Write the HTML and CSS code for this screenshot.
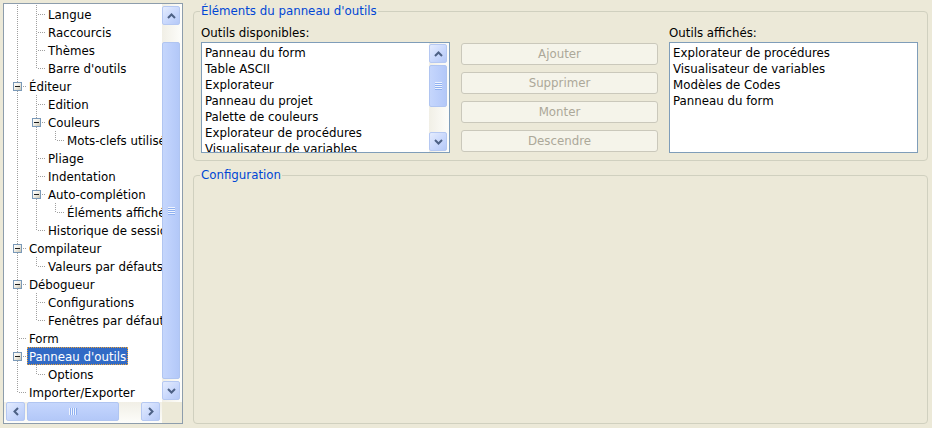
FILE: index.html
```html
<!DOCTYPE html>
<html lang="fr">
<head>
<meta charset="utf-8">
<title>Options</title>
<link rel="stylesheet" href="styles.css">
</head>
<body>
<div class="app">
  <div class="tree">
    <div class="tree-view">
      <div class="row"><span class="c g"></span><span class="c t"></span><span class="lbl">Langue</span></div>
      <div class="row"><span class="c g"></span><span class="c t"></span><span class="lbl">Raccourcis</span></div>
      <div class="row"><span class="c g"></span><span class="c t"></span><span class="lbl">Thèmes</span></div>
      <div class="row"><span class="c g"></span><span class="c l"></span><span class="lbl">Barre d'outils</span></div>
      <div class="row"><span class="c t"><span class="box"></span></span><span class="lbl">Éditeur</span></div>
      <div class="row"><span class="c g"></span><span class="c t"></span><span class="lbl">Edition</span></div>
      <div class="row"><span class="c g"></span><span class="c t"><span class="box"></span></span><span class="lbl">Couleurs</span></div>
      <div class="row"><span class="c g"></span><span class="c g"></span><span class="c l"></span><span class="lbl">Mots-clefs utilisés</span></div>
      <div class="row"><span class="c g"></span><span class="c t"></span><span class="lbl">Pliage</span></div>
      <div class="row"><span class="c g"></span><span class="c t"></span><span class="lbl">Indentation</span></div>
      <div class="row"><span class="c g"></span><span class="c t"><span class="box"></span></span><span class="lbl">Auto-complétion</span></div>
      <div class="row"><span class="c g"></span><span class="c g"></span><span class="c l"></span><span class="lbl">Éléments affichés</span></div>
      <div class="row"><span class="c g"></span><span class="c l"></span><span class="lbl">Historique de session</span></div>
      <div class="row"><span class="c t"><span class="box"></span></span><span class="lbl">Compilateur</span></div>
      <div class="row"><span class="c g"></span><span class="c l"></span><span class="lbl">Valeurs par défauts</span></div>
      <div class="row"><span class="c t"><span class="box"></span></span><span class="lbl">Débogueur</span></div>
      <div class="row"><span class="c g"></span><span class="c t"></span><span class="lbl">Configurations</span></div>
      <div class="row"><span class="c g"></span><span class="c l"></span><span class="lbl">Fenêtres par défaut</span></div>
      <div class="row"><span class="c t"></span><span class="lbl">Form</span></div>
      <div class="row"><span class="c t"><span class="box"></span></span><span class="lbl sel">Panneau d'outils</span></div>
      <div class="row"><span class="c g"></span><span class="c l"></span><span class="lbl">Options</span></div>
      <div class="row"><span class="c l"></span><span class="lbl">Importer/Exporter</span></div>
    </div>
    <div class="vscroll">
      <div class="sb-btn"><svg width="9" height="6" viewBox="0 0 9 6"><path d="M1 5 L4.5 1.5 L8 5" fill="none" stroke="#4d6185" stroke-width="2"/></svg></div>
      <div class="thumb tree-vthumb"><span class="grip-v"></span></div>
      <div class="sb-btn push"><svg width="9" height="6" viewBox="0 0 9 6"><path d="M1 1 L4.5 4.5 L8 1" fill="none" stroke="#4d6185" stroke-width="2"/></svg></div>
    </div>
    <div class="hscroll">
      <div class="sb-btn wide"><svg width="6" height="9" viewBox="0 0 6 9"><path d="M5 1 L1.5 4.5 L5 8" fill="none" stroke="#4d6185" stroke-width="2"/></svg></div>
      <div class="thumb tree-hthumb"><span class="grip-h"></span></div>
      <div class="sb-btn wide push-x"><svg width="6" height="9" viewBox="0 0 6 9"><path d="M1 1 L4.5 4.5 L1 8" fill="none" stroke="#4d6185" stroke-width="2"/></svg></div>
    </div>
    <div class="corner"></div>
  </div>

  <div class="pane">
    <fieldset class="group tools">
      <legend>Éléments du panneau d'outils</legend>
      <div class="tools-grid">
        <div class="cap">Outils disponibles:</div>
        <div class="cap col3">Outils affichés:</div>
        <div class="listbox with-sb">
          <div class="items">
            <div class="item">Panneau du form</div>
            <div class="item">Table ASCII</div>
            <div class="item">Explorateur</div>
            <div class="item">Panneau du projet</div>
            <div class="item">Palette de couleurs</div>
            <div class="item">Explorateur de procédures</div>
            <div class="item">Visualisateur de variables</div>
          </div>
          <div class="lsb">
            <div class="sb-btn"><svg width="9" height="6" viewBox="0 0 9 6"><path d="M1 5 L4.5 1.5 L8 5" fill="none" stroke="#4d6185" stroke-width="2"/></svg></div>
            <div class="thumb list-vthumb"><span class="grip-v"></span></div>
            <div class="sb-btn push"><svg width="9" height="6" viewBox="0 0 9 6"><path d="M1 1 L4.5 4.5 L8 1" fill="none" stroke="#4d6185" stroke-width="2"/></svg></div>
          </div>
        </div>
        <div class="actions">
          <button class="btn" disabled>Ajouter</button>
          <button class="btn" disabled>Supprimer</button>
          <button class="btn" disabled>Monter</button>
          <button class="btn" disabled>Descendre</button>
        </div>
        <div class="listbox">
          <div class="items">
            <div class="item">Explorateur de procédures</div>
            <div class="item">Visualisateur de variables</div>
            <div class="item">Modèles de Codes</div>
            <div class="item">Panneau du form</div>
          </div>
        </div>
      </div>
    </fieldset>
    <fieldset class="group config">
      <legend>Configuration</legend>
    </fieldset>
  </div>
</div>
</body>
</html>
```

FILE: styles.css
```css
html, body {
  margin: 0;
  padding: 0;
}

body {
  background: #ece9d8;
  color: #000;
  font-family: "DejaVu Sans", "Liberation Sans", sans-serif;
  font-size: 11.8px;
  line-height: 14px;
}

.app {
  display: flex;
  gap: 10px;
  height: 428px;
  box-sizing: border-box;
  padding: 3px 4px 4px 3px;
}

/* ---------- tree ---------- */
.tree {
  flex: none;
  width: 180px;
  box-sizing: border-box;
  border: 1px solid #8d9dac;
  background: #fff;
  display: grid;
  grid-template-columns: 1fr 20px;
  grid-template-rows: 1fr 21px;
  overflow: hidden;
}

.tree-view {
  overflow: hidden;
  padding: 1px 0 0 4px;
  min-width: 0;
}

.row {
  display: flex;
  height: 18px;
  white-space: nowrap;
}

.lbl {
  flex: none;
  height: 18px;
  line-height: 20px;
  padding: 0 2px;
}

.lbl.sel {
  background: #316ac5;
  color: #fff;
  outline: 1px dotted #e9a23c;
  outline-offset: -1px;
}

.c {
  flex: none;
  width: 19px;
  height: 18px;
  display: flex;
  justify-content: center;
  align-items: flex-start;
  background-repeat: no-repeat;
}

.g {
  background-image: repeating-linear-gradient(to bottom, #a0a0a0 0 1px, transparent 1px 2px);
  background-position: 9px 0;
  background-size: 1px 18px;
}

.t {
  background-image:
    repeating-linear-gradient(to bottom, #a0a0a0 0 1px, transparent 1px 2px),
    repeating-linear-gradient(to right, #a0a0a0 0 1px, transparent 1px 2px);
  background-position: 9px 0, 11px 9px;
  background-size: 1px 18px, 8px 1px;
}

.l {
  background-image:
    repeating-linear-gradient(to bottom, #a0a0a0 0 1px, transparent 1px 2px),
    repeating-linear-gradient(to right, #a0a0a0 0 1px, transparent 1px 2px);
  background-position: 9px 0, 11px 9px;
  background-size: 1px 10px, 8px 1px;
}

.box {
  width: 9px;
  height: 9px;
  margin-top: 5px;
  box-sizing: border-box;
  border: 1px solid #7a99b8;
  background: linear-gradient(135deg, #ffffff 0%, #f2f0e8 45%, #c9c4b2 100%);
  display: flex;
  align-items: center;
  justify-content: center;
}

.box::after {
  content: "";
  width: 5px;
  height: 1px;
  background: #1c1c1c;
}

/* ---------- scrollbars ---------- */
.vscroll,
.lsb {
  display: flex;
  flex-direction: column;
  background: linear-gradient(to right, #f1efe6, #fdfdfa);
}

.vscroll {
  padding: 2px 2px 2px 0;
}

.lsb {
  padding: 1px 2px 1px 0;
}

.hscroll {
  display: flex;
  align-items: flex-start;
  padding: 0 2px 2px 2px;
  background: linear-gradient(to bottom, #f1efe6, #fdfdfa);
}

.corner {
  background: #ece9d8;
}

.sb-btn {
  flex: none;
  width: 18px;
  height: 19px;
  box-sizing: border-box;
  border: 1px solid #b5c8f2;
  border-radius: 2px;
  background: linear-gradient(135deg, #e4ecfe 0%, #c9d8fc 55%, #b5c9f7 100%);
  display: flex;
  align-items: center;
  justify-content: center;
}

.sb-btn.wide {
  width: 19px;
}

.sb-btn.push {
  margin-top: auto;
}

.sb-btn.push-x {
  margin-left: auto;
}

.thumb {
  flex: none;
  box-sizing: border-box;
  border: 1px solid #b0c5f1;
  border-radius: 2px;
  background: linear-gradient(to right, #c5d6fc, #bccffb 50%, #b3c8f8);
  display: flex;
  align-items: center;
  justify-content: center;
}

.tree-vthumb {
  width: 18px;
  height: 337px;
  margin-top: 17px;
}

.tree-hthumb {
  width: 92px;
  height: 19px;
  margin-left: 2px;
  background: linear-gradient(to bottom, #c5d6fc, #bccffb 50%, #b3c8f8);
}

.list-vthumb {
  width: 18px;
  height: 42px;
  margin-top: 2px;
}

.grip-v {
  width: 7px;
  height: 8px;
  background: repeating-linear-gradient(to bottom, #eef3fe 0 1px, #8fb0f0 1px 2px);
}

.grip-h {
  width: 8px;
  height: 7px;
  background: repeating-linear-gradient(to right, #eef3fe 0 1px, #8fb0f0 1px 2px);
}

/* ---------- right pane ---------- */
.pane {
  flex: 1;
  min-width: 0;
  display: flex;
  flex-direction: column;
  gap: 7px;
}

.group {
  margin: 0;
  min-width: 0;
  border: 1px solid #d0d0bf;
  border-radius: 4px;
  padding: 8px 9px 7px 7px;
}

.group legend {
  color: #0046d5;
  line-height: 14px;
  padding: 0 1px;
  margin-left: -1px;
}

.tools {
  margin-top: 1px;
}

.config {
  flex: 1;
}

.tools-grid {
  display: grid;
  grid-template-columns: 249px 197px 249px;
  grid-template-rows: 14px 111px;
  column-gap: 11px;
  row-gap: 2px;
}

.cap {
  white-space: nowrap;
}

.cap.col3 {
  grid-column: 3;
}

.listbox {
  grid-row: 2;
  box-sizing: border-box;
  height: 111px;
  border: 1px solid #7f9db9;
  background: #fff;
  overflow: hidden;
  display: grid;
  grid-template-columns: 1fr;
}

.listbox.with-sb {
  grid-template-columns: 1fr 20px;
}

.items {
  overflow: hidden;
  padding: 2px 0 0 3px;
  min-width: 0;
}

.item {
  height: 16px;
  line-height: 16px;
  white-space: nowrap;
}

.actions {
  grid-row: 2;
  display: flex;
  flex-direction: column;
  gap: 7px;
  margin-top: 1px;
}

.btn {
  height: 22px;
  margin: 0;
  padding: 0;
  box-sizing: border-box;
  border: 1px solid #cac8bb;
  border-radius: 3px;
  background: #f5f4ea;
  color: #aca899;
  font: inherit;
  line-height: 20px;
  text-align: center;
}
```
